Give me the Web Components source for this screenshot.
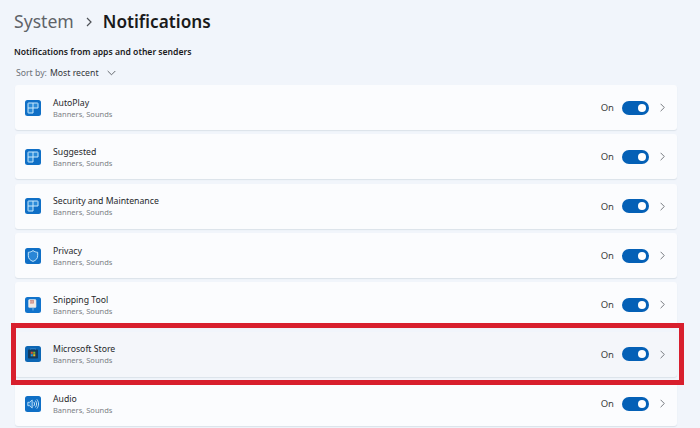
<!DOCTYPE html>
<html>
<head>
<meta charset="utf-8">
<style>
  html, body { margin: 0; height: 100%; overflow: hidden; background: #f1f5fb; }
  body { font-family: "Noto Sans", "Open Sans", sans-serif; }
</style>
</head>
<body>
<settings-page>
  <page-header slot="header" parent="System" current="Notifications"></page-header>
  <setting-row icon="tiles" name="AutoPlay"></setting-row>
  <setting-row icon="tiles" name="Suggested"></setting-row>
  <setting-row icon="tiles" name="Security and Maintenance"></setting-row>
  <setting-row icon="shield" name="Privacy"></setting-row>
  <setting-row icon="snip" name="Snipping Tool"></setting-row>
  <setting-row icon="store" name="Microsoft Store" class="marked"></setting-row>
  <setting-row icon="audio" name="Audio"></setting-row>
</settings-page>

<script>
(function () {
  const ICONS = {
    tiles: `<rect x="0" y="0" width="16" height="16" rx="2.500" fill="#0f6fc6"/>
      <path d="M3.500 3h9a.5.5 0 0 1 .5.5V8H8v5H3.500a.5.5 0 0 1-.5-.5v-9a.5.5 0 0 1 .5-.5z" fill="#2a8ad8" stroke="#c9e9fc" stroke-width="1"/>
      <path d="M3 8h5V3" fill="none" stroke="#c9e9fc" stroke-width="1"/>`,
    shield: `<rect x="0" y="0" width="16" height="16" rx="2.500" fill="#0f6fc6"/>
      <path d="M8 2.600c1.500 1.100 3 1.600 4.700 1.700v3.500c0 2.700-1.800 4.600-4.700 5.600-2.900-1-4.700-2.900-4.700-5.600V4.300C5 4.200 6.500 3.700 8 2.600z" fill="#2a86d6" stroke="#c4e6fb" stroke-width="1"/>`,
    snip: `<rect x="0" y="0" width="16" height="16" rx="2.500" fill="#1173cc"/>
      <rect x="3.600" y="2.600" width="7.400" height="8" rx=".8" fill="#f1e9e4" stroke="#dfe6ee" stroke-width=".6"/>
      <path d="M5 3v3.500h3.800V3z" fill="#c9837c"/>
      <path d="M5.800 3.500v2.300M7.200 3.500v2.300" stroke="#f5e8e4" stroke-width=".6"/>
      <path d="M8 10.800v2.700" stroke="#7db9ec" stroke-width="1"/>`,
    store: `<rect x="0" y="0" width="16" height="16" rx="2.500" fill="#0c66b4"/>
      <rect x="3" y="3.600" width="10" height="9" rx=".8" fill="#123a5e"/>
      <path d="M5.500 3.600v-1h5v1" fill="none" stroke="#3d8bcc" stroke-width=".7"/>
      <rect x="5.700" y="5.700" width="2.100" height="2.100" fill="#d9532c"/>
      <rect x="8.200" y="5.700" width="2.100" height="2.100" fill="#7fb52e"/>
      <rect x="5.700" y="8.200" width="2.100" height="2.100" fill="#2a9ad8"/>
      <rect x="8.200" y="8.200" width="2.100" height="2.100" fill="#eeb422"/>`,
    audio: `<rect x="0" y="0" width="16" height="16" rx="2.500" fill="#0f6fc6"/>
      <path d="M2.800 6.300h1.700l2.700-2.300v8l-2.700-2.300H2.800z" fill="#2a86d6" stroke="#d3ecfc" stroke-width=".8" stroke-linejoin="round"/>
      <path d="M9 6.200c.8 1.100.8 2.500 0 3.600M10.600 4.900c1.400 1.900 1.400 4.300 0 6.200M12.100 3.700c2 2.600 2 6 0 8.600" fill="none" stroke="#d3ecfc" stroke-width=".9" stroke-linecap="round"/>`
  };

  class SettingsPage extends HTMLElement {
    constructor() {
      super();
      this.attachShadow({ mode: "open" });
      this.shadowRoot.innerHTML = `
        <style>
          :host{
            display:block;
            box-sizing:border-box;
            height:428px;
            padding:0 23px 0 15px;
            position:relative;
          }
          .list{
            display:grid;
            grid-auto-rows:45px;
            row-gap:4.35px;
          }
          .subtitle{
            font-size:8.600px;
            font-weight:600;
            color:#1b1b1b;
            margin:0 0 0 -1px;
            line-height:14px;
          }
          .sort{
            display:flex;
            align-items:center;
            gap:3px;
            font-size:8.700px;
            line-height:14px;
            margin:7px 0 5px 1px;
            color:#6d7178;
          }
          .sort b{
            font-weight:400;
            color:#33363a;
          }
          .sort svg{
            margin-left:5px;
          }
          .mark{
            position:absolute;
            left:11px;
            top:323px;
            width:673px;
            height:62px;
            box-sizing:border-box;
            border:5px solid #d81f2d;
            pointer-events:none;
          }
        </style>
        <slot name="header"></slot>
        <div class="subtitle">Notifications from apps and other senders</div>
        <div class="sort">
          <span>Sort by:</span><b>Most recent</b>
          <svg width="9" height="6" viewBox="0 0 9 6"><path d="M.7 1l3.800 3.800L8.300 1" fill="none" stroke="#55595f" stroke-width=".9"/></svg>
        </div>
        <div class="list"><slot></slot></div>
        <div class="mark"></div>
      `;
    }
  }

  class PageHeader extends HTMLElement {
    constructor() {
      super();
      this.attachShadow({ mode: "open" });
      this.shadowRoot.innerHTML = `
        <style>
          :host{
            display:flex;
            align-items:center;
            height:42px;
            margin:0 0 3px -1px;
            font-size:17.600px;
          }
          .parent{ color:#5f6368; }
          .current{ color:#1a1a1a; font-weight:600; font-size:17.200px; }
          svg{ margin:2px 11px 0 12px; }
        </style>
        <span class="parent"></span>
        <svg width="6" height="10" viewBox="0 0 6 10"><path d="M1 1l4 4-4 4" fill="none" stroke="#4e5257" stroke-width="1.200"/></svg>
        <span class="current"></span>
      `;
    }

    connectedCallback() {
      this.shadowRoot.querySelector(".parent").textContent = this.getAttribute("parent");
      this.shadowRoot.querySelector(".current").textContent = this.getAttribute("current");
    }
  }

  class SettingRow extends HTMLElement {
    constructor() {
      super();
      this.attachShadow({ mode: "open" });
      this.shadowRoot.innerHTML = `
        <style>
          :host{
            display:flex;
            align-items:center;
            box-sizing:border-box;
            height:45px;
            padding:0 12px 0 10px;
            background:#fbfcfe;
            border-radius:3px;
            box-shadow:0 1px 1px rgba(60,80,110,.12);
          }
          :host(.marked){ background:#f4f6fa; }
          .icon{ width:16px; height:16px; flex:none; display:block; }
          .text{ flex:1; margin-left:12px; min-width:0; padding-top:2px; }
          .name{ font-size:8.700px; line-height:11px; color:#26282b; }
          .sub{ font-size:7.500px; line-height:11px; color:#7b7f85; }
          .state{ font-size:9.500px; color:#3b3d40; margin-right:8px; }
          .end{ margin-left:11px; flex:none; display:block; }
        </style>
        <svg class="icon" viewBox="0 0 16 16"></svg>
        <div class="text">
          <div class="name"></div>
          <div class="sub">Banners, Sounds</div>
        </div>
        <span class="state">On</span>
        <toggle-switch></toggle-switch>
        <svg class="end" width="5" height="9" viewBox="0 0 5 9"><path d="M.6.8l3.700 3.700L.6 8.200" fill="none" stroke="#6a6e74" stroke-width=".9"/></svg>
      `;
    }

    connectedCallback() {
      this.shadowRoot.querySelector(".name").textContent = this.getAttribute("name");
      this.shadowRoot.querySelector(".icon").innerHTML = ICONS[this.getAttribute("icon")];
    }
  }

  class ToggleSwitch extends HTMLElement {
    constructor() {
      super();
      this.attachShadow({ mode: "open" });
      this.shadowRoot.innerHTML = `
        <style>
          :host{
            display:flex;
            align-items:center;
            justify-content:flex-end;
            box-sizing:border-box;
            flex:none;
            width:27px;
            height:14px;
            padding-right:3px;
            border-radius:7px;
            background:#0460b6;
          }
          .knob{
            width:8px;
            height:8px;
            border-radius:50%;
            background:#fff;
          }
        </style>
        <div class="knob"></div>
      `;
    }
  }

  customElements.define("settings-page", SettingsPage);
  customElements.define("page-header", PageHeader);
  customElements.define("setting-row", SettingRow);
  customElements.define("toggle-switch", ToggleSwitch);
})();
</script>
</body>
</html>
